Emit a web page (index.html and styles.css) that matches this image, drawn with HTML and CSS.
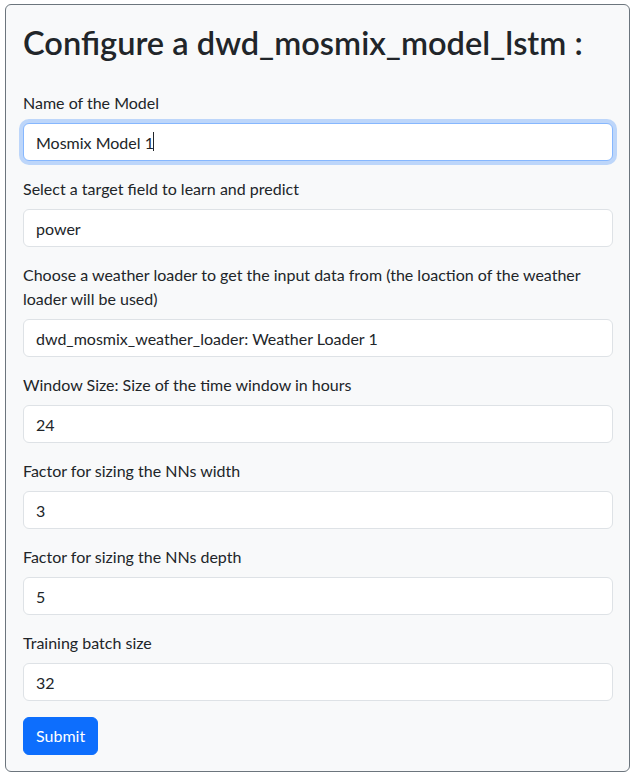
FILE: index.html
```html
<!DOCTYPE html>
<html lang="en">
<head>
<meta charset="utf-8">
<title>Configure model</title>
<link rel="stylesheet" href="styles.css">
</head>
<body>
<div class="panel">
  <h1 class="title">Configure a dwd_mosmix_model_lstm :</h1>
  <form class="form">
    <div class="field">
      <label class="label" for="name">Name of the Model</label>
      <div class="input-wrap">
        <input class="input is-focused" id="name" type="text" value="Mosmix Model 1">
        <span class="caret" aria-hidden="true"></span>
      </div>
    </div>
    <div class="field">
      <label class="label" for="target">Select a target field to learn and predict</label>
      <input class="input" id="target" type="text" value="power">
    </div>
    <div class="field">
      <label class="label" for="loader">Choose a weather loader to get the input data from (the loaction of the weather loader will be used)</label>
      <input class="input" id="loader" type="text" value="dwd_mosmix_weather_loader: Weather Loader 1">
    </div>
    <div class="field">
      <label class="label" for="window">Window Size: Size of the time window in hours</label>
      <input class="input" id="window" type="text" value="24">
    </div>
    <div class="field">
      <label class="label" for="width">Factor for sizing the NNs width</label>
      <input class="input" id="width" type="text" value="3">
    </div>
    <div class="field">
      <label class="label" for="depth">Factor for sizing the NNs depth</label>
      <input class="input" id="depth" type="text" value="5">
    </div>
    <div class="field">
      <label class="label" for="batch">Training batch size</label>
      <input class="input" id="batch" type="text" value="32">
    </div>
    <div class="actions">
      <button class="btn" type="submit">Submit</button>
    </div>
  </form>
</div>
</body>
</html>
```
FILE: styles.css
```css
* { box-sizing: border-box; }
html, body { margin: 0; padding: 0; background: #fff; }
body {
  font-family: "Lato", "Noto Sans", sans-serif;
  font-size: 16px;
  line-height: 24px;
  color: #212529;
  padding: 4px 5px 8px 5px;
}
.panel {
  background: #f8f9fa;
  border: 1px solid #6c757d;
  border-radius: 6px;
  padding: 19px 16px 16px 17px;
  min-height: 768px;
}
.title {
  margin: 0 0 29px 0;
  font-size: 32.6px;
  line-height: 38px;
  font-weight: 600;
}
.form { display: flex; flex-direction: column; }
.field { display: flex; flex-direction: column; margin-bottom: 16px; }
.label { display: block; margin-bottom: 8px; }
.input-wrap { position: relative; }
.input {
  display: block;
  width: 100%;
  height: 38px;
  padding: 6px 12px;
  font: inherit;
  color: #212529;
  background: #fff;
  border: 1px solid #dee2e6;
  border-radius: 6px;
  outline: none;
}
.input.is-focused {
  border-color: #86b7fe;
  box-shadow: 0 0 0 4px rgba(13, 110, 253, 0.25);
}
.caret {
  position: absolute;
  left: 130px;
  top: 9px;
  width: 1px;
  height: 19px;
  background: #212529;
}
.actions { display: flex; }
.btn {
  font: inherit;
  color: #fff;
  background: #0d6efd;
  border: 1px solid #0d6efd;
  border-radius: 6px;
  padding: 6px 12px;
  height: 38px;
  cursor: pointer;
}
```
